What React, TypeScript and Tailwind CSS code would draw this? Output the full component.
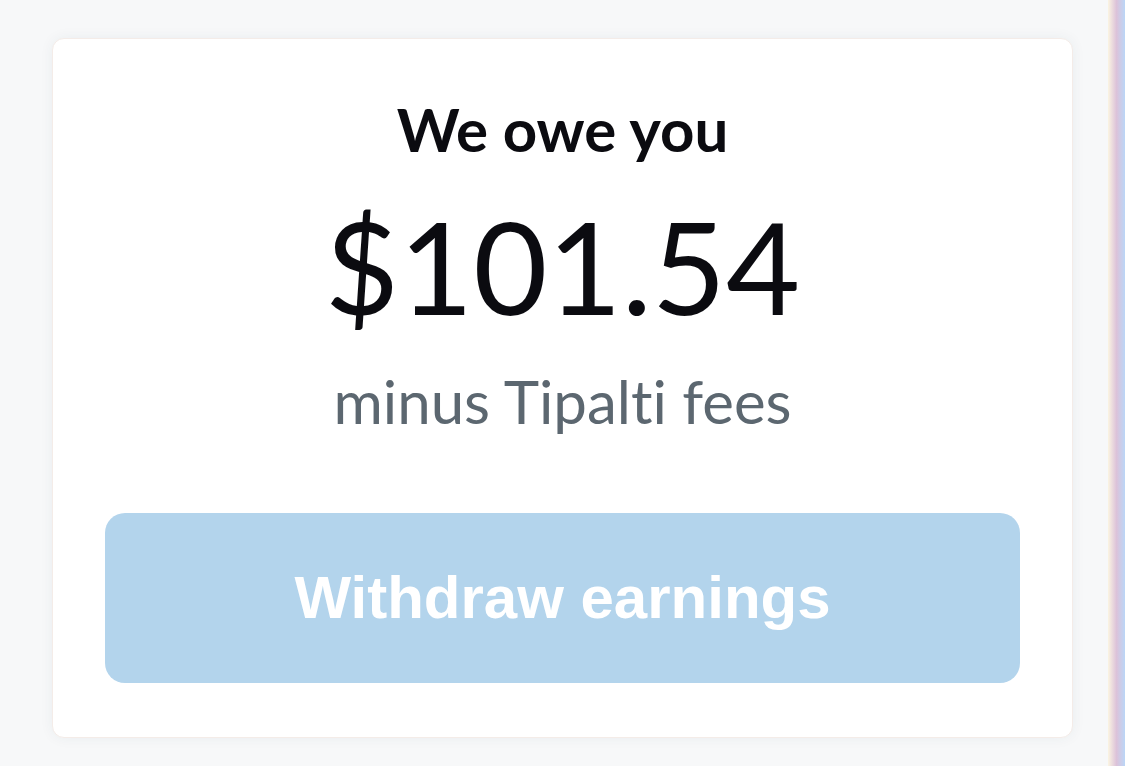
export default function App() {
  return (
    <div className="flex h-[766px] w-full bg-[#f7f8f9] font-['Lato','Noto_Sans',sans-serif] [font-variant-ligatures:none]">
      {/* Main */}
      <div className="flex-1 pl-[52px] pr-[35px] pt-[38px]">
        <div className="flex h-[700px] flex-col items-center rounded-[12px] border border-[#f4ece8] bg-white px-[52px] pt-[60px] pb-[50px] shadow-[0_0_14px_rgba(30,60,90,0.06)]">
          <div className="text-[60px] font-bold leading-none text-[#0b0b10]">We owe you</div>
          <div className="mt-[43px] text-[128px] leading-none text-[#0b0b10]">$101.54</div>
          <div className="mt-[41px] text-[60px] leading-none text-[#5c6770]">minus Tipalti fees</div>
          <button className="mt-[82px] flex h-[170px] w-full shrink-0 items-center justify-center rounded-[20px] bg-[#b3d4ec] font-['Liberation_Sans',Arial,sans-serif] text-[60px] font-bold text-white">
            Withdraw earnings
          </button>
        </div>
      </div>

      {/* Edge */}
      <div className="w-[17px] bg-linear-to-r from-[#fbf5e2] via-[#dcc2d9] to-[#bad6f7]" />
    </div>
  )
}
